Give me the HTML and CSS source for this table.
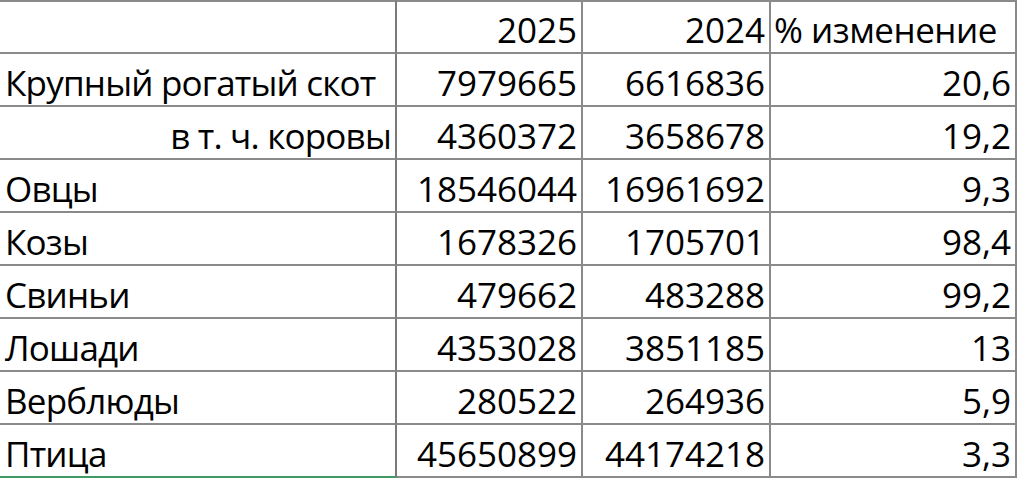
FILE: index.html
```html
<!DOCTYPE html>
<html lang="ru">
<head>
<meta charset="utf-8">
<title>Поголовье скота</title>
<link rel="stylesheet" href="styles.css">
</head>
<body>
<div class="sheet">
  <div class="cell head name"></div>
  <div class="cell head num">2025</div>
  <div class="cell head num">2024</div>
  <div class="cell head label">% изменение</div>

  <div class="cell name">Крупный рогатый скот</div>
  <div class="cell num">7979665</div>
  <div class="cell num">6616836</div>
  <div class="cell num">20,6</div>

  <div class="cell name right">в т. ч. коровы</div>
  <div class="cell num">4360372</div>
  <div class="cell num">3658678</div>
  <div class="cell num">19,2</div>

  <div class="cell name">Овцы</div>
  <div class="cell num">18546044</div>
  <div class="cell num">16961692</div>
  <div class="cell num">9,3</div>

  <div class="cell name">Козы</div>
  <div class="cell num">1678326</div>
  <div class="cell num">1705701</div>
  <div class="cell num">98,4</div>

  <div class="cell name">Свиньи</div>
  <div class="cell num">479662</div>
  <div class="cell num">483288</div>
  <div class="cell num">99,2</div>

  <div class="cell name">Лошади</div>
  <div class="cell num">4353028</div>
  <div class="cell num">3851185</div>
  <div class="cell num">13</div>

  <div class="cell name">Верблюды</div>
  <div class="cell num">280522</div>
  <div class="cell num">264936</div>
  <div class="cell num">5,9</div>

  <div class="cell name selected">Птица</div>
  <div class="cell num">45650899</div>
  <div class="cell num">44174218</div>
  <div class="cell num">3,3</div>
</div>
</body>
</html>
```

FILE: styles.css
```css
html, body {
  margin: 0;
  padding: 0;
  background: #ffffff;
}

.sheet {
  display: grid;
  grid-template-columns: 397px 186px 188px 246px;
  grid-template-rows: 54px repeat(8, 53px);
  font-family: "Open Sans", "Noto Sans", sans-serif;
  font-size: 35px;
  font-weight: 500;
  color: #000000;
}

.cell {
  box-sizing: border-box;
  border-right: 2px solid #8a8a8a;
  border-bottom: 2px solid #8a8a8a;
  display: flex;
  align-items: flex-end;
  padding: 0 4px 5px 5px;
  line-height: 1;
  white-space: nowrap;
  overflow: hidden;
}

.cell.name {
  border-right-color: #7a7a7a;
  letter-spacing: -0.8px;
}

.head {
  border-top: 2px solid #8a8a8a;
}

.num {
  justify-content: flex-end;
}

.label {
  justify-content: flex-start;
  padding-left: 3px;
  letter-spacing: -0.5px;
}

.right {
  justify-content: flex-end;
}

.selected {
  border-bottom-color: #3f9a63;
}
```
